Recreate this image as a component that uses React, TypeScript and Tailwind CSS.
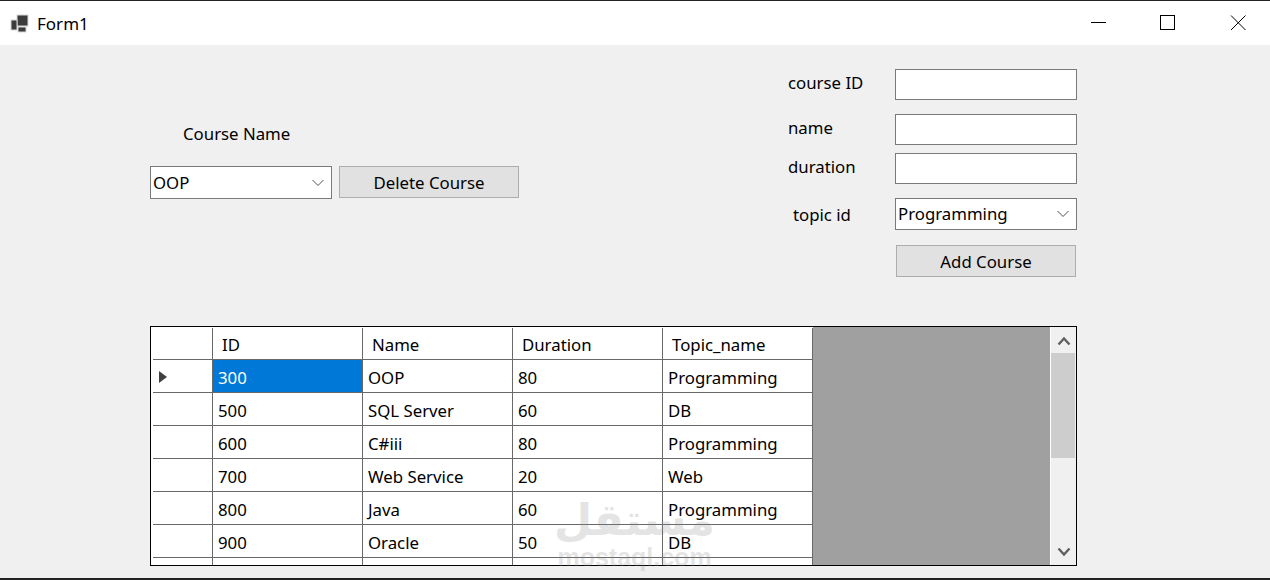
const rows = [
  { id: "300", name: "OOP", duration: "80", topic: "Programming" },
  { id: "500", name: "SQL Server", duration: "60", topic: "DB" },
  { id: "600", name: "C#iii", duration: "80", topic: "Programming" },
  { id: "700", name: "Web Service", duration: "20", topic: "Web" },
  { id: "800", name: "Java", duration: "60", topic: "Programming" },
  { id: "900", name: "Oracle", duration: "50", topic: "DB" },
];

const headers = ["ID", "Name", "Duration", "Topic_name"];

const ComboBox = ({ value, width }: { value: string; width: string }) => (
  <div className={`${width} flex items-center justify-between border border-[#7a7a7a] bg-white pl-[2px] pr-[6px]`}>
    <span>{value}</span>
    <svg width="14" height="8" viewBox="0 0 14 8" fill="none" stroke="#505050" strokeWidth="1">
      <path d="M1.5 1 L7 6.5 L12.5 1" />
    </svg>
  </div>
);

const FlatButton = ({ label, className }: { label: string; className: string }) => (
  <button className={`${className} flex items-center justify-center border border-[#adadad] bg-[#e1e1e1]`}>
    {label}
  </button>
);

const TextBox = () => <div className="h-[31px] w-[182px] border border-[#7a7a7a] bg-white" />;

export default function App() {
  return (
    <div className="relative flex h-[580px] w-[1270px] flex-col overflow-hidden bg-[#f0f0f0] font-['Noto_Sans',sans-serif] text-[16.8px] leading-none text-black">
      {/* title bar */}
      <div className="flex h-[45px] shrink-0 items-center border-t border-[#222222] bg-white">
        <svg className="ml-[10px]" width="20" height="20" viewBox="0 0 20 20">
          <rect x="7" y="2" width="11" height="11" fill="#3c3c3c" stroke="#d8d8d8" />
          <rect x="1" y="7" width="6" height="10" fill="#3c3c3c" stroke="#d8d8d8" />
          <rect x="8" y="14" width="8" height="5" fill="#3c3c3c" stroke="#d8d8d8" />
        </svg>
        <span className="ml-[7px] text-[17px]">Form1</span>
        <div className="ml-auto flex items-center pr-[24px]">
          <svg width="16" height="16" viewBox="0 0 16 16" stroke="#000" fill="none">
            <path d="M0 7.5 H15" />
          </svg>
          <svg className="ml-[53px]" width="16" height="16" viewBox="0 0 16 16" stroke="#000" fill="none">
            <rect x="0.5" y="0.5" width="14" height="14" />
          </svg>
          <svg className="ml-[54px]" width="16" height="16" viewBox="0 0 16 16" stroke="#000" fill="none">
            <path d="M1 0.5 L15.5 15 M15.5 0.5 L1 15" />
          </svg>
        </div>
      </div>

      {/* form area */}
      <div className="flex h-[281px] shrink-0 pl-[150px]">
        <div className="w-[638px] pt-[81px]">
          <div className="pl-[33px]">Course Name</div>
          <div className="mt-[23px] flex gap-[7px]">
            <ComboBox value="OOP" width="h-[33px] w-[182px] pt-[2px]" />
            <FlatButton label="Delete Course" className="h-[32px] w-[180px] pt-[3px]" />
          </div>
        </div>
        <div className="w-[289px] pt-[24px]">
          <div className="flex">
            <div className="w-[107px] pt-[6px]">course ID</div>
            <TextBox />
          </div>
          <div className="mt-[14px] flex">
            <div className="w-[107px] pt-[6px]">name</div>
            <TextBox />
          </div>
          <div className="mt-[8px] flex">
            <div className="w-[107px] pt-[6px]">duration</div>
            <TextBox />
          </div>
          <div className="mt-[14px] flex">
            <div className="flex w-[107px] items-center pl-[5px] pt-[2px]">topic id</div>
            <ComboBox value="Programming" width="h-[32px] w-[182px]" />
          </div>
          <div className="mt-[15px] pl-[108px]">
            <FlatButton label="Add Course" className="h-[32px] w-[180px] pt-[2px]" />
          </div>
        </div>
      </div>

      {/* data grid */}
      <div className="ml-[150px] flex h-[240px] w-[927px] shrink-0 overflow-hidden border border-black bg-[#a0a0a0]">
        <div className="w-[662px] shrink-0 bg-white pl-[2px] pt-px">
          <div className="flex h-[32px] border-b border-[#696969]">
            <div className="w-[60px] shrink-0 border-r border-[#696969]" />
            {headers.map((h) => (
              <div key={h} className="flex w-[150px] shrink-0 items-center border-r border-[#696969] pl-[9px] pt-[4px]">
                {h}
              </div>
            ))}
          </div>
          {rows.map((r, i) => (
            <div key={r.id} className="flex h-[33px] border-b border-[#696969]">
              <div className="flex w-[60px] shrink-0 items-center border-r border-[#696969] pl-[6px]">
                {i === 0 && (
                  <svg className="mt-[2px]" width="8" height="12" viewBox="0 0 8 12">
                    <path d="M0 0 L8 6 L0 12 Z" fill="#404040" />
                  </svg>
                )}
              </div>
              <div className={`flex w-[150px] shrink-0 items-center border-r border-[#696969] pl-[5px] pt-[4px] ${i === 0 ? "bg-[#0078d7] text-white" : ""}`}>
                {r.id}
              </div>
              <div className="flex w-[150px] shrink-0 items-center border-r border-[#696969] pl-[5px] pt-[4px]">{r.name}</div>
              <div className="flex w-[150px] shrink-0 items-center border-r border-[#696969] pl-[5px] pt-[4px]">{r.duration}</div>
              <div className="flex w-[150px] shrink-0 items-center border-r border-[#696969] pl-[5px] pt-[4px]">{r.topic}</div>
            </div>
          ))}
          <div className="flex h-[20px]">
            <div className="w-[60px] shrink-0 border-r border-[#696969]" />
            {headers.map((h) => (
              <div key={h} className="w-[150px] shrink-0 border-r border-[#696969]" />
            ))}
          </div>
        </div>
        <div className="ml-[237px] flex w-[26px] shrink-0 flex-col items-center border-l border-white bg-[#f0f0f0]">
          <svg className="mt-[9px]" width="14" height="10" viewBox="0 0 14 10" fill="none" stroke="#606060" strokeWidth="2.4">
            <path d="M1.5 8.5 L7 2.5 L12.5 8.5" />
          </svg>
          <div className="mt-[7px] h-[105px] w-[24px] self-start bg-[#cdcdcd]" />
          <svg className="mt-auto mb-[8px]" width="14" height="10" viewBox="0 0 14 10" fill="none" stroke="#606060" strokeWidth="2.4">
            <path d="M1.5 1.5 L7 7.5 L12.5 1.5" />
          </svg>
        </div>
      </div>

      {/* watermark over the grid */}
      <div className="absolute left-[558px] top-[492px] flex w-[153px] flex-col items-center text-[#8a8a8a] opacity-[0.22]">
        <div className="font-['DejaVu_Sans',sans-serif] text-[44px] font-bold leading-[56px]" dir="rtl">
          مستقل
        </div>
        <div className="font-['Liberation_Sans',sans-serif] text-[25px] font-bold leading-[18px]">mostaql.com</div>
      </div>

      <div className="mt-auto h-[2px] shrink-0 bg-[#222222]" />
    </div>
  );
}
